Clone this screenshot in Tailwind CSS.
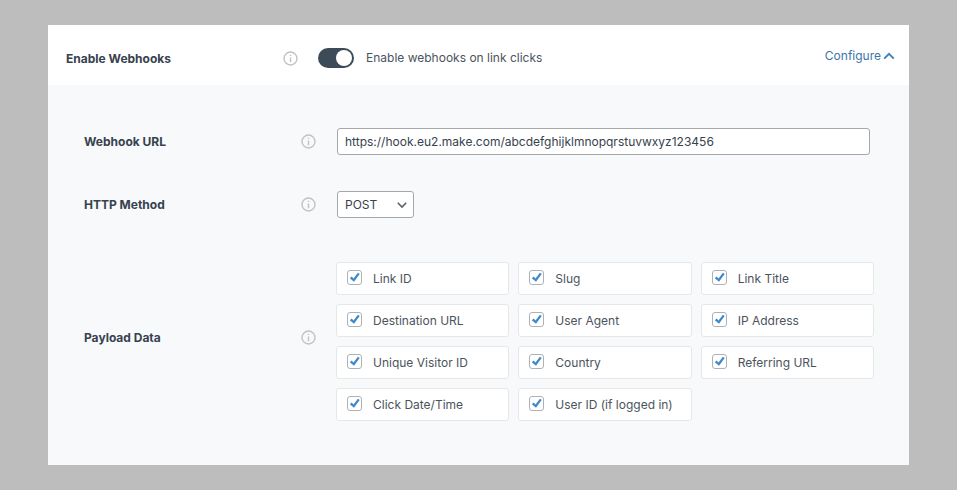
<!DOCTYPE html>
<html lang="en">
  <head>
    <meta charset="UTF-8" />
    <meta name="viewport" content="width=device-width, initial-scale=1.0" />
    <title>Webhook Settings</title>
    <script src="https://cdn.jsdelivr.net/npm/@tailwindcss/browser@4"></script>
  </head>

  <body class="min-h-screen bg-[#bdbdbd] px-12 py-[25px] font-['Inter',sans-serif] text-xs leading-5 text-[#4b545d]">
    <svg class="hidden">
      <symbol id="info" viewBox="0 0 15 15">
        <circle cx="7.5" cy="7.5" r="6.5" fill="none" stroke="currentColor" stroke-width="1.4" />
        <path d="M7.5 6.5v4.7M7.5 3.7v1.4" stroke="currentColor" stroke-width="1.4" />
      </symbol>
      <symbol id="tick" viewBox="0 0 15 15">
        <path d="M2.8 8.2 4.7 6.6 6.5 8.6 10.9 2.8 12.7 4 7 11.8Z" fill="currentColor" />
      </symbol>
    </svg>

    <main class="bg-[#f8f9fb]">
      <header class="flex items-center bg-white px-[18px] pt-[21px] pb-[15px]">
        <h2 class="w-[217px] shrink-0 pt-px font-bold text-[#36424e]">Enable Webhooks</h2>
        <svg class="mr-5 size-[15px] shrink-0 text-[#c0c2c4]" aria-hidden="true"><use href="#info" /></svg>
        <label class="flex grow items-center gap-3">
          <input type="checkbox" checked class="peer sr-only" />
          <span class="flex h-5 w-9 rounded-full bg-[#a7adb3] p-0.5 peer-checked:justify-end peer-checked:bg-[#3c4b57]">
            <span class="size-4 rounded-full bg-white"></span>
          </span>
          Enable webhooks on link clicks
        </label>
        <a href="#webhook-options" class="-mr-1 flex items-center gap-0.5 pb-1 text-[#3b76ab]">
          Configure
          <svg class="h-2 w-3" viewBox="0 0 12 8" fill="none" stroke="#4084bf" stroke-width="2" aria-hidden="true">
            <path d="M1.2 6.6 6 1.8l4.8 4.8" />
          </svg>
        </a>
      </header>

      <form id="webhook-options" class="pt-[43px] pr-[35px] pb-11 pl-9">
        <div class="mb-9 flex items-center">
          <label for="url" class="w-[217px] shrink-0 font-bold text-[#36424e]">Webhook URL</label>
          <svg class="mr-5 size-[15px] shrink-0 text-[#c0c2c4]" aria-hidden="true"><use href="#info" /></svg>
          <input
            type="text"
            id="url"
            value="https://hook.eu2.make.com/abcdefghijklmnopqrstuvwxyz123456"
            class="mr-1 ml-px h-[27px] min-w-0 grow rounded-[3px] border border-[#a5a7aa] bg-white px-[7px] text-[#36424e]"
          />
        </div>

        <div class="mb-11 flex items-center">
          <label for="method" class="w-[217px] shrink-0 font-bold text-[#36424e]">HTTP Method</label>
          <svg class="mr-5 size-[15px] shrink-0 text-[#c0c2c4]" aria-hidden="true"><use href="#info" /></svg>
          <div class="relative ml-px">
            <select id="method" class="block h-[27px] w-[77px] appearance-none rounded-[3px] border border-[#a5a7aa] bg-white pl-[7px] text-[#36424e]">
              <option>POST</option>
              <option>GET</option>
            </select>
            <svg class="pointer-events-none absolute top-2.5 right-[7px] h-2 w-2.5" viewBox="0 0 10 8" fill="none" stroke="#5a626a" stroke-width="1.6" aria-hidden="true">
              <path d="M.8 1.8 5 6l4.2-4.2" />
            </svg>
          </div>
        </div>

        <div class="flex items-center">
          <h3 class="w-[217px] shrink-0 pb-2 font-bold text-[#36424e]">Payload Data</h3>
          <svg class="mr-5 mb-2 size-[15px] shrink-0 text-[#c0c2c4]" aria-hidden="true"><use href="#info" /></svg>
          <div id="fields" class="grid grow grid-cols-3 gap-[9px]"></div>
        </div>
      </form>
    </main>

    <script>
      const fields = [
        "Link ID", "Slug", "Link Title",
        "Destination URL", "User Agent", "IP Address",
        "Unique Visitor ID", "Country", "Referring URL",
        "Click Date/Time", "User ID (if logged in)",
      ];

      document.getElementById("fields").innerHTML = fields.map((name) => `
        <label class="flex h-[33px] items-center gap-[11px] rounded-[3px] border border-[#e6e7e8] bg-white px-2.5 whitespace-nowrap">
          <span class="mb-0.5 grid shrink-0">
            <input type="checkbox" checked class="peer col-start-1 row-start-1 size-[15px] appearance-none rounded-[3px] border border-[#aeb1b5] bg-white" />
            <svg class="pointer-events-none invisible col-start-1 row-start-1 size-[15px] text-[#4189c7] peer-checked:visible" aria-hidden="true"><use href="#tick" /></svg>
          </span>
          ${name}
        </label>`).join("");
    </script>
  </body>
</html>
